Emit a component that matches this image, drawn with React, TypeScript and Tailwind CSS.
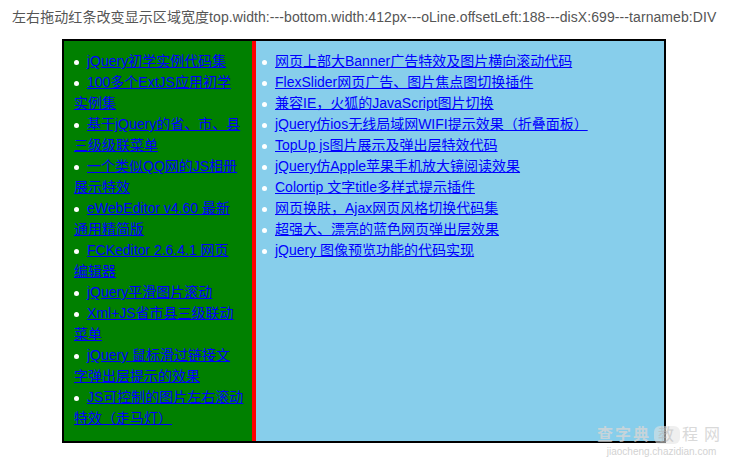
import React from "react";

const leftItems: string[][] = [
  ["jQuery初学实例代码集"],
  ["100多个ExtJS应用初学", "实例集"],
  ["基于jQuery的省、市、县", "三级级联菜单"],
  ["一个类似QQ网的JS相册", "展示特效"],
  ["eWebEditor v4.60 最新", "通用精简版"],
  ["FCKeditor 2.6.4.1 网页", "编辑器"],
  ["jQuery平滑图片滚动"],
  ["Xml+JS省市县三级联动", "菜单"],
  ["jQuery 鼠标滑过链接文", "字弹出层提示的效果"],
  ["JS可控制的图片左右滚动", "特效（走马灯）"],
];

const rightItems = [
  "网页上部大Banner广告特效及图片横向滚动代码",
  "FlexSlider网页广告、图片焦点图切换插件",
  "兼容IE，火狐的JavaScript图片切换",
  "jQuery仿ios无线局域网WIFI提示效果（折叠面板）",
  "TopUp js图片展示及弹出层特效代码",
  "jQuery仿Apple苹果手机放大镜阅读效果",
  "Colortip 文字title多样式提示插件",
  "网页换肤，Ajax网页风格切换代码集",
  "超强大、漂亮的蓝色网页弹出层效果",
  "jQuery 图像预览功能的代码实现",
];

const font = { fontFamily: '"Liberation Sans", Arial, "Noto Sans CJK SC", sans-serif' };

function Bullet() {
  return (
    <span className="inline-block w-[13px] align-middle">
      <span className="block w-[5px] h-[5px] rounded-full bg-white" />
    </span>
  );
}

export default function App() {
  return (
    <div
      className="relative w-[729px] h-[461px] bg-white overflow-hidden text-[14px] leading-[21px]"
      style={font}
    >
      <div className="pl-[12px] pt-[7px] text-[#555] whitespace-nowrap tracking-[0.08px]">
        左右拖动红条改变显示区域宽度top.width:---bottom.width:412px---oLine.offsetLeft:188---disX:699---tarnameb:DIV
      </div>
      <div className="ml-[62px] mt-[11px] w-[604px] h-[404px] border-2 border-black flex">
        <div className="w-[188px] h-full bg-[#008000] pt-[10px] pl-[10px] pr-[2px] overflow-hidden">
          <ul className="list-none">
            {leftItems.map((lines) => (
              <li key={lines.join("")} className="whitespace-nowrap">
                <Bullet />
                <a href="#" className="text-[#0000ff] underline">
                  {lines.map((l, i) => (
                    <React.Fragment key={i}>
                      {i > 0 && <br />}
                      {l}
                    </React.Fragment>
                  ))}
                </a>
              </li>
            ))}
          </ul>
        </div>
        <div className="w-[4px] h-full bg-[#ff0000]" />
        <div className="flex-1 h-full bg-[#87ceeb] pt-[10px] pl-[6px]">
          <ul className="list-none">
            {rightItems.map((t) => (
              <li key={t} className="whitespace-nowrap">
                <Bullet />
                <a href="#" className="text-[#0000ff] underline">
                  {t}
                </a>
              </li>
            ))}
          </ul>
        </div>
      </div>
      <div className="absolute left-[597px] top-[426px] flex flex-col items-center opacity-80">
        <div className="flex items-center text-[16px] leading-[18px] text-[#cfcfcf] tracking-[2px]">
          <span className="font-bold text-[#d6d6d6]">查字典</span>
          <span className="ml-[3px] px-[4px] rounded-[6px] bg-[#e4e4e4]/70 text-[#c4c4c4]">教</span>
          <span className="ml-[2px] text-[#d0d0d0] tracking-[6px]">程网</span>
        </div>
        <div className="text-[10px] leading-[12px] text-[#c8c8c8] mt-[2px]">jiaocheng.chazidian.com</div>
      </div>
    </div>
  );
}
